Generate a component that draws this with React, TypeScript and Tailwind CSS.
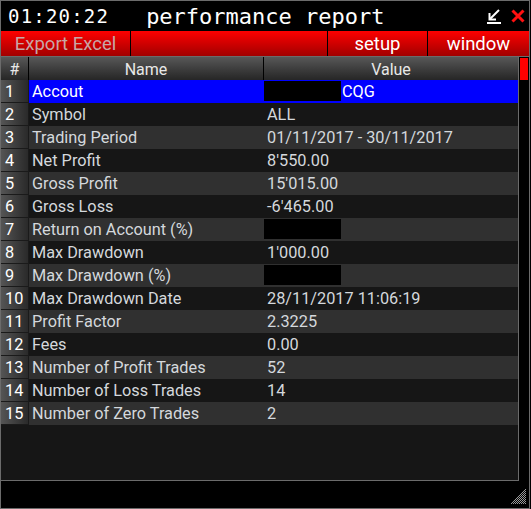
import React from 'react';

const rows: { name: string; value?: string; masked?: boolean }[] = [
  { name: 'Accout', value: 'CQG', masked: true },
  { name: 'Symbol', value: 'ALL' },
  { name: 'Trading Period', value: '01/11/2017 - 30/11/2017' },
  { name: 'Net Profit', value: "8'550.00" },
  { name: 'Gross Profit', value: "15'015.00" },
  { name: 'Gross Loss', value: "-6'465.00" },
  { name: 'Return on Account (%)', masked: true },
  { name: 'Max Drawdown', value: "1'000.00" },
  { name: 'Max Drawdown (%)', masked: true },
  { name: 'Max Drawdown Date', value: '28/11/2017 11:06:19' },
  { name: 'Profit Factor', value: '2.3225' },
  { name: 'Fees', value: '0.00' },
  { name: 'Number of Profit Trades', value: '52' },
  { name: 'Number of Loss Trades', value: '14' },
  { name: 'Number of Zero Trades', value: '2' },
];

function MinimizeIcon() {
  return (
    <svg width="14" height="15" viewBox="0 0 14 15">
      <path d="M12 1 L3 10" stroke="#fff" strokeWidth="2" />
      <path d="M2.5 4 V10.5 H9" stroke="#fff" strokeWidth="2" fill="none" />
      <path d="M0 14 H14" stroke="#fff" strokeWidth="2" />
    </svg>
  );
}

function CloseIcon() {
  return (
    <svg width="14" height="14" viewBox="0 0 14 14">
      <path d="M1.5 1.5 L12.5 12.5 M12.5 1.5 L1.5 12.5" stroke="#ff1010" strokeWidth="3" />
    </svg>
  );
}

function Grip() {
  return (
    <svg width="16" height="16" viewBox="0 0 16 16">
      <defs>
        <pattern id="chk" width="2" height="2" patternUnits="userSpaceOnUse">
          <rect x="0" y="0" width="1" height="1" fill="#9a9a9a" />
          <rect x="1" y="1" width="1" height="1" fill="#9a9a9a" />
        </pattern>
      </defs>
      <polygon points="16,0 16,16 0,16" fill="url(#chk)" />
    </svg>
  );
}

export default function App() {
  return (
    <div className="w-[531px] h-[509px] bg-black">
      <div className="w-[530px] h-[509px] border border-[#6b6b6b] flex flex-col font-['Roboto',sans-serif]">
        {/* Title bar */}
        <div className="h-[30px] flex items-center text-white">
          <span className="ml-[7px] text-[19px] tracking-[1.2px] font-['DejaVu_Sans_Mono',monospace] leading-none">
            01:20:22
          </span>
          <span className="ml-[37px] pt-[2px] text-[22px] font-['DejaVu_Sans_Mono',monospace] leading-none">
            performance report
          </span>
          <div className="ml-auto mr-[4px] flex items-center gap-[10px]">
            <MinimizeIcon />
            <CloseIcon />
          </div>
        </div>

        {/* Toolbar */}
        <div className="h-[25px] flex bg-gradient-to-b from-[#ff0000] to-[#a20000] text-[18.5px] leading-none">
          <div className="w-[130px] flex items-center justify-center pt-[2px] text-[#c8a6a6] border-r border-black">
            Export Excel
          </div>
          <div className="w-[197px] border-r border-black" />
          <div className="w-[100px] flex items-center justify-center pt-[2px] text-white border-r border-black">
            setup
          </div>
          <div className="flex-1 flex items-center justify-center pt-[2px] text-white">window</div>
        </div>

        {/* Grid + scrollbar */}
        <div className="h-[425px] flex">
          <div className="w-[518px] border-t border-b border-r border-[#6b6b6b] bg-[#161616] flex flex-col">
            <div className="h-[23px] flex bg-gradient-to-b from-[#585858] to-[#262626] text-[16px] text-[#e8e8e8]">
              <div className="w-[28px] border-r border-black flex items-center justify-center pt-[3px]">#</div>
              <div className="w-[235px] border-r border-black flex items-center justify-center pt-[3px]">Name</div>
              <div className="flex-1 flex items-center justify-center pt-[3px]">Value</div>
            </div>
            {rows.map((r, i) => {
              const selected = i === 0;
              const bg = selected ? 'bg-[#0000ff]' : i % 2 === 0 ? 'bg-[#303030]' : 'bg-[#161616]';
              return (
                <div key={i} className={`h-[23px] flex text-[16.3px] ${bg}`}>
                  <div className="w-[28px] border-r border-b border-[#1a1a1a] bg-gradient-to-r from-[#555555] to-[#2a2a2a] text-white flex items-center pl-[4px] pt-[2px]">
                    {i + 1}
                  </div>
                  <div className={`w-[235px] flex items-center pl-[3px] pt-[2px] ${selected ? 'text-white' : 'text-[#d4d8dc]'}`}>
                    {r.name}
                  </div>
                  <div className={`flex-1 flex items-center ${selected ? 'text-white' : 'text-[#d4d8dc]'}`}>
                    {r.masked && <div className="w-[77px] h-[20px] mt-[-1px] bg-black" />}
                    <span className={`pt-[2px] ${r.masked ? 'pl-[1px]' : 'pl-[3px]'}`}>{r.value}</span>
                  </div>
                </div>
              );
            })}
          </div>
          <div className="flex-1 border-t border-[#6b6b6b]">
            <div className="ml-[1px] mt-[1px] w-[8px] h-[22px] bg-[#ff0000]" />
          </div>
        </div>

        {/* Bottom band */}
        <div className="flex-1 flex items-end justify-end pr-[3px] pb-[4px]">
          <Grip />
        </div>
      </div>
    </div>
  );
}
